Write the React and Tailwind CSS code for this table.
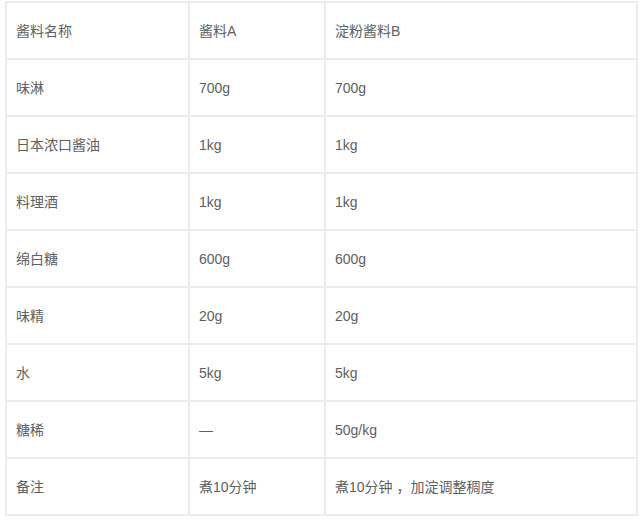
import React from "react";

const rows = [
  ["酱料名称", "酱料A", "淀粉酱料B"],
  ["味淋", "700g", "700g"],
  ["日本浓口酱油", "1kg", "1kg"],
  ["料理酒", "1kg", "1kg"],
  ["绵白糖", "600g", "600g"],
  ["味精", "20g", "20g"],
  ["水", "5kg", "5kg"],
  ["糖稀", "—", "50g/kg"],
  ["备注", "煮10分钟", "煮10分钟 ，加淀调整稠度"],
];

export default function App() {
  return (
    <div
      className="w-[641px] h-[521px] bg-white pl-[5px] pt-[1px]"
      style={{ fontFamily: '"Liberation Sans", "Noto Sans CJK SC", sans-serif' }}
    >
      <table className="w-[631px] border-collapse text-[14px] text-[#606060] table-fixed">
        <colgroup>
          <col className="w-[183px]" />
          <col className="w-[136px]" />
          <col className="w-[312px]" />
        </colgroup>
        <tbody>
          {rows.map((r, idx) => (
            <tr key={idx} className="h-[57px]">
              {r.map((cell, i) => (
                <td
                  key={i}
                  className="border-2 border-[#ececec] px-[9px] align-middle leading-none whitespace-pre"
                >
                  {cell}
                </td>
              ))}
            </tr>
          ))}
        </tbody>
      </table>
    </div>
  );
}
